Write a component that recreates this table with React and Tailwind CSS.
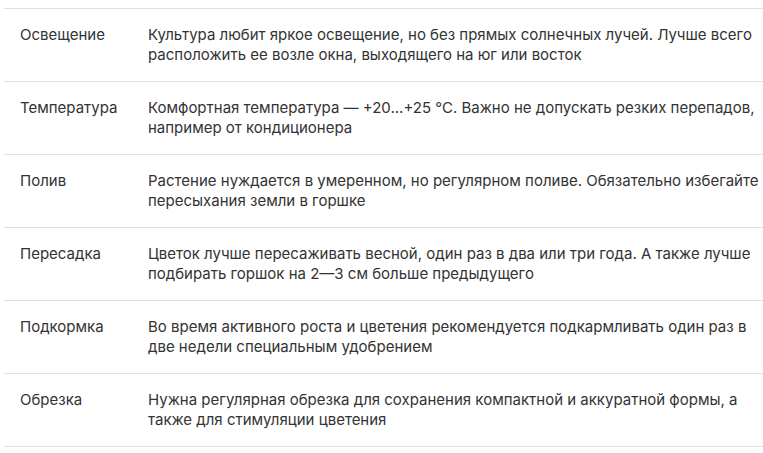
const rows = [
  {
    label: "Освещение",
    text: "Культура любит яркое освещение, но без прямых солнечных лучей. Лучше всего расположить ее возле окна, выходящего на юг или восток",
  },
  {
    label: "Температура",
    text: "Комфортная температура — +20...+25 °С. Важно не допускать резких перепадов, например от кондиционера",
  },
  {
    label: "Полив",
    text: "Растение нуждается в умеренном, но регулярном поливе. Обязательно избегайте пересыхания земли в горшке",
  },
  {
    label: "Пересадка",
    text: "Цветок лучше пересаживать весной, один раз в два или три года. А также лучше подбирать горшок на 2—3 см больше предыдущего",
  },
  {
    label: "Подкормка",
    text: "Во время активного роста и цветения рекомендуется подкармливать один раз в две недели специальным удобрением",
  },
  {
    label: "Обрезка",
    text: "Нужна регулярная обрезка для сохранения компактной и аккуратной формы, а также для стимуляции цветения",
  },
];

export default function App() {
  return (
    <div className="min-h-screen bg-white pt-2 pl-1 font-['Inter',sans-serif] text-[15px] leading-5 text-[#333333]">
      <div className="border-t border-[#e0e0e0]">
        {rows.map((row) => (
          <div
            key={row.label}
            className="flex border-b border-[#e0e0e0] py-4 pl-4"
          >
            <div className="w-[128px] shrink-0">{row.label}</div>
            <div className="flex-1">{row.text}</div>
          </div>
        ))}
      </div>
    </div>
  );
}
